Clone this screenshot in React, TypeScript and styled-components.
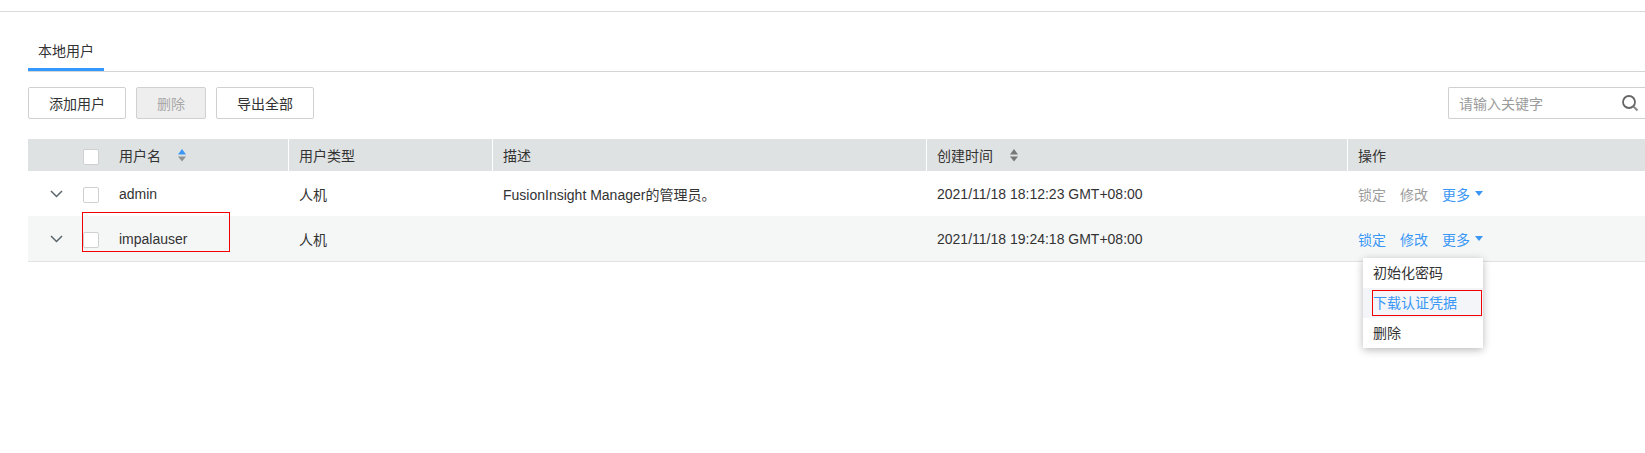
import React from "react";
import styled, { createGlobalStyle } from "styled-components";

const Global = createGlobalStyle`
  html, body { margin: 0; padding: 0; background: #fff; }
  body { font-family: "Liberation Sans", "Noto Sans CJK SC", sans-serif; font-size: 14px; color: #333; }
`;

const Page = styled.div`
  width: 1645px;
  height: 453px;
  overflow: hidden;
  position: relative;
`;
const TopRule = styled.div`
  height: 11px;
  border-bottom: 1px solid #d9d9d9;
`;
const Content = styled.div`
  padding: 0 0 0 28px;
`;
const TabBar = styled.div`
  margin-top: 27px;
  height: 32px;
  display: flex;
  border-bottom: 1px solid #d4d6d6;
`;
const Tab = styled.div`
  width: 76px;
  height: 32px;
  box-sizing: border-box;
  border-bottom: 3px solid #3399ff;
  padding-left: 10px;
  line-height: 25px;
  color: #333;
`;
const Toolbar = styled.div`
  margin-top: 15px;
  height: 32px;
  display: flex;
  gap: 10px;
`;
const Button = styled.div<{ $w: number; $disabled?: boolean }>`
  width: ${(p) => p.$w}px;
  height: 32px;
  box-sizing: border-box;
  border: 1px solid #cfd1d1;
  border-radius: 2px;
  display: flex;
  align-items: center;
  justify-content: center;
  background: ${(p) => (p.$disabled ? "#eeeeee" : "#fff")};
  color: ${(p) => (p.$disabled ? "#a8a8a8" : "#333")};
`;
const Search = styled.div`
  margin-left: auto;
  width: 197px;
  height: 32px;
  box-sizing: border-box;
  border: 1px solid #cfd1d1;
  border-right: none;
  border-radius: 2px 0 0 2px;
  display: flex;
  align-items: center;
  justify-content: space-between;
  padding: 0 6px 0 10px;
  color: #9b9b9b;
`;
const Table = styled.div`
  margin-top: 20px;
`;
const columns = "260px 204px 434px 421px 1fr";
const HeadRow = styled.div`
  display: grid;
  grid-template-columns: ${columns};
  height: 32px;
  background: #dfe2e2;
`;
const HeadCell = styled.div<{ $first?: boolean }>`
  display: flex;
  align-items: center;
  box-sizing: border-box;
  padding-left: ${(p) => (p.$first ? "0" : "10px")};
  border-left: ${(p) => (p.$first ? "none" : "1px solid #fff")};
  color: #333;
`;
const Row = styled.div<{ $alt?: boolean }>`
  display: grid;
  grid-template-columns: ${columns};
  height: 45px;
  background: ${(p) => (p.$alt ? "#f5f7f7" : "#fff")};
  border-bottom: ${(p) => (p.$alt ? "1px solid #e1e3e3" : "none")};
  box-sizing: ${(p) => (p.$alt ? "content-box" : "border-box")};
`;
const Cell = styled.div`
  display: flex;
  align-items: center;
  padding-left: 11px;
  white-space: nowrap;
  color: #333;
`;
const NameCell = styled.div`
  display: flex;
  align-items: center;
`;
const ExpandSlot = styled.div`
  width: 55px;
  display: flex;
  justify-content: center;
  box-sizing: border-box;
  padding-left: 2px;
`;
const Check = styled.div<{ $head?: boolean }>`
  width: 16px;
  height: 16px;
  box-sizing: border-box;
  background: #fff;
  border: 1px solid #cfd1d1;
  border-radius: 2px;
  margin-top: ${(p) => (p.$head ? 4 : 3)}px;
  margin-right: 20px;
`;
const SortLabel = styled.span`
  margin-right: 17px;
`;
const SortGlyph = styled.svg`
  display: block;
`;
const Action = styled.span<{ $muted?: boolean; $gap?: number }>`
  color: ${(p) => (p.$muted ? "#9d9d9d" : "#3a97f5")};
  margin-right: ${(p) => p.$gap ?? 14}px;
`;
const Menu = styled.div`
  position: absolute;
  left: 1363px;
  top: 258px;
  width: 120px;
  background: #fff;
  border-radius: 2px;
  box-shadow: 0 2px 8px rgba(0, 0, 0, 0.28);
`;
const MenuItem = styled.div<{ $active?: boolean }>`
  height: 30px;
  line-height: 30px;
  padding-left: 10px;
  background: ${(p) => (p.$active ? "#f3f5f8" : "#fff")};
  color: ${(p) => (p.$active ? "#3a97f5" : "#333")};
`;
const Annotation = styled.div<{ $x: number; $y: number; $w: number; $h: number }>`
  position: absolute;
  left: ${(p) => p.$x}px;
  top: ${(p) => p.$y}px;
  width: ${(p) => p.$w}px;
  height: ${(p) => p.$h}px;
  box-sizing: border-box;
  border: 1px solid #f00000;
`;

const Sort = ({ up = "#777", down = "#777" }: { up?: string; down?: string }) => (
  <SortGlyph width="8" height="14" viewBox="0 0 8 14">
    <path d="M4 1 8 6.5H0Z" fill={up} />
    <path d="M0 8.5H8L4 13.5Z" fill={down} />
  </SortGlyph>
);
const Chevron = () => (
  <svg width="13" height="8" viewBox="0 0 13 8" fill="none">
    <path d="M1 1 6.5 6.5 12 1" stroke="#5a656b" strokeWidth="1.5" />
  </svg>
);
const Caret = () => (
  <svg width="8" height="5" viewBox="0 0 8 5">
    <path d="M0 0H8L4 5Z" fill="#3a97f5" />
  </svg>
);
const SearchIcon = () => (
  <svg width="18" height="18" viewBox="0 0 18 18" fill="none">
    <circle cx="8" cy="8" r="6" stroke="#666" strokeWidth="1.8" />
    <path d="M12.5 12.5 16.5 16.5" stroke="#888" strokeWidth="2" />
  </svg>
);

const rows = [
  { name: "admin", desc: "FusionInsight Manager的管理员。", time: "2021/11/18 18:12:23 GMT+08:00", muted: true },
  { name: "impalauser", desc: "", time: "2021/11/18 19:24:18 GMT+08:00", muted: false },
];

export default function App() {
  return (
    <Page>
      <Global />
      <TopRule />
      <Content>
        <TabBar>
          <Tab>本地用户</Tab>
        </TabBar>
        <Toolbar>
          <Button $w={98}>添加用户</Button>
          <Button $w={70} $disabled>删除</Button>
          <Button $w={98}>导出全部</Button>
          <Search>
            <span>请输入关键字</span>
            <SearchIcon />
          </Search>
        </Toolbar>
        <Table>
          <HeadRow>
            <HeadCell $first>
              <ExpandSlot />
              <Check $head />
              <SortLabel>用户名</SortLabel>
              <Sort up="#3a97f5" down="#8f9394" />
            </HeadCell>
            <HeadCell>用户类型</HeadCell>
            <HeadCell>描述</HeadCell>
            <HeadCell>
              <SortLabel>创建时间</SortLabel>
              <Sort />
            </HeadCell>
            <HeadCell>操作</HeadCell>
          </HeadRow>
          {rows.map((r, i) => (
            <Row key={r.name} $alt={i === 1}>
              <NameCell>
                <ExpandSlot><Chevron /></ExpandSlot>
                <Check />
                <span>{r.name}</span>
              </NameCell>
              <Cell>人机</Cell>
              <Cell>{r.desc}</Cell>
              <Cell>{r.time}</Cell>
              <Cell>
                <Action $muted={r.muted}>锁定</Action>
                <Action $muted={r.muted}>修改</Action>
                <Action $gap={5}>更多</Action>
                <Caret />
              </Cell>
            </Row>
          ))}
        </Table>
      </Content>
      <Menu>
        <MenuItem>初始化密码</MenuItem>
        <MenuItem $active>下载认证凭据</MenuItem>
        <MenuItem>删除</MenuItem>
      </Menu>
      <Annotation $x={82} $y={212} $w={148} $h={40} />
      <Annotation $x={1372} $y={290} $w={110} $h={26} />
    </Page>
  );
}
